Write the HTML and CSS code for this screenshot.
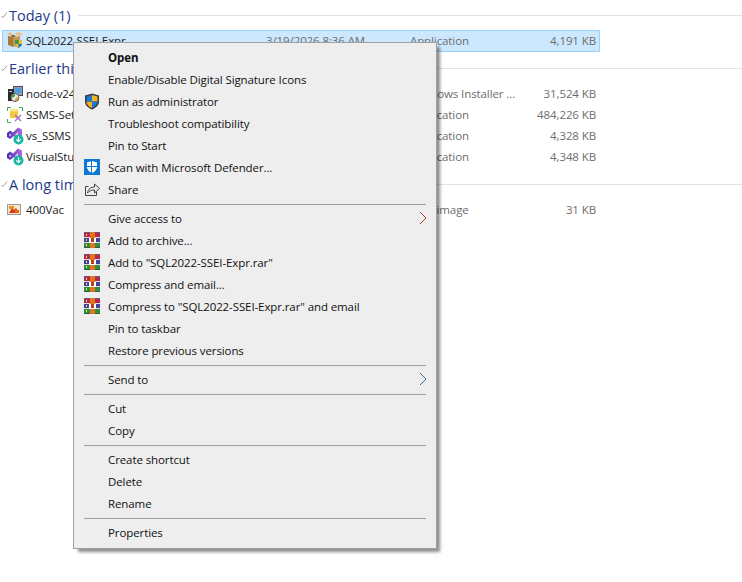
FILE: index.html
```html
<!DOCTYPE html>
<html lang="en">
<head>
    <meta charset="UTF-8">
    <meta name="viewport" content="width=device-width, initial-scale=1.0">
    <title>Downloads</title>
    <link rel="stylesheet" href="styles.css">
</head>
<body>
    <svg class="defs" width="0" height="0">
        <defs>
            <linearGradient id="vsFill" x1="0" y1="0" x2="1" y2="0">
                <stop offset="0" stop-color="#4a2fb0"/>
                <stop offset="1" stop-color="#b56ae6"/>
            </linearGradient>
            <symbol id="rar" viewBox="0 0 16 16">
                <rect x="0" y="0" width="16" height="1" fill="#6e5a78"/>
                <rect x="0" y="1" width="16" height="4" fill="#b5264f"/>
                <rect x="0" y="5" width="16" height="1" fill="#dcdcdc"/>
                <rect x="0" y="6" width="16" height="4" fill="#45419f"/>
                <rect x="0" y="10" width="16" height="1" fill="#dcdcdc"/>
                <rect x="0" y="11" width="16" height="4" fill="#2b8f3f"/>
                <rect x="0" y="15" width="16" height="1" fill="#3d5a3f"/>
                <rect x="2" y="2" width="1" height="2" fill="#f4e04a"/>
                <rect x="2" y="7" width="1" height="2" fill="#f4e04a"/>
                <rect x="2" y="12" width="1" height="2" fill="#f4e04a"/>
                <rect x="6" y="0" width="5" height="16" fill="#e2761f"/>
                <rect x="5" y="6" width="7" height="5" fill="#fff"/>
                <rect x="7" y="6" width="3" height="4" fill="#b8401a"/>
            </symbol>
            <symbol id="vs" viewBox="0 0 18 18">
                <path d="M1 6l3-2.500 3 2 5-5 4 2v9l-4 2-4-4.500L4 12 1 10z" fill="url(#vsFill)"/>
                <path d="M3.500 6.500v3L5.500 8zM12 5l-3 3 3 3z" fill="#efe6fa"/>
                <circle cx="12.500" cy="12.500" r="5" fill="#19b5a0"/>
                <path d="M12.500 9.500v5M10.300 12.300l2.200 2.400 2.200-2.400" fill="none" stroke="#fff" stroke-width="1.200"/>
            </symbol>
        </defs>
    </svg>

    <div class="list">
        <section class="group first">
            <div class="group-head">
                <svg class="chev" width="7" height="7" viewBox="0 0 7 7"><path d="M0.500 5.500l1.500 1 4-5" fill="none" stroke="#a0a0a0"/></svg>
                <span class="group-title">Today (1)</span>
                <span class="group-line"></span>
            </div>
            <div class="row selected">
                <svg class="file-icon" width="16" height="16" viewBox="0 0 16 16">
                    <path d="M1 4l5 1v10l-5-2z" fill="#a87a38"/>
                    <path d="M6 5l7-1v4l-3 2v4l-4 1z" fill="#c89a56"/>
                    <path d="M0 2l3-2 3 2-1 2-4-1zM8 1l4-1 4 2-3 2-4-1z" fill="#e4c48a"/>
                    <path d="M6 3l3 1-3 1-2-1z" fill="#5c4018"/>
                    <path d="M8 8h7v4c0 2-2 3-3.500 4C10 15 8 14 8 12z" fill="#2a6fc4"/>
                    <path d="M11.500 8H15v4h-3.500zM8 12h3.500v4C10 15 8 14 8 12z" fill="#e9c02c"/>
                    <path d="M8 8h3.500v4H8z" fill="#3a9a4a"/>
                </svg>
                <span class="name">SQL2022-SSEI-Expr</span>
                <span class="date">3/19/2026 8:36 AM</span>
                <span class="type">Application</span>
                <span class="size">4,191 KB</span>
            </div>
        </section>

        <section class="group">
            <div class="group-head">
                <svg class="chev" width="7" height="7" viewBox="0 0 7 7"><path d="M0.500 5.500l1.500 1 4-5" fill="none" stroke="#a0a0a0"/></svg>
                <span class="group-title">Earlier this week</span>
                <span class="group-line"></span>
            </div>
            <div class="row">
                <svg class="file-icon" width="16" height="16" viewBox="0 0 16 16">
                    <rect x="6.500" y="0.500" width="9" height="9" fill="#8fa0b8" stroke="#4a4a60"/>
                    <rect x="8" y="2" width="6" height="5" fill="#4f9be0"/>
                    <rect x="1" y="3" width="6" height="12" fill="#2a2a2a"/>
                    <rect x="2" y="5" width="3" height="1" fill="#c8c8c8"/>
                    <circle cx="8" cy="11.500" r="4" fill="#e8e8f0" stroke="#555"/>
                    <path d="M8 8v3.500H4.500C4.500 9.500 6 8 8 8z" fill="#3aa84c"/>
                    <path d="M8 11.500h3.500c0 2-1.500 3.500-3.500 3.500z" fill="#e0a030"/>
                    <circle cx="8" cy="11.500" r="1" fill="#fff"/>
                </svg>
                <span class="name">node-v24.14.0-x64</span>
                <span class="date"></span>
                <span class="type">Windows Installer ...</span>
                <span class="size">31,524 KB</span>
            </div>
            <div class="row">
                <svg class="file-icon" width="16" height="16" viewBox="0 0 16 16">
                    <path d="M0.500 4V0.500H4M12 0.500h3.500V4M0.500 12v3.500H4" fill="none" stroke="#46a84c"/>
                    <rect x="3" y="2" width="8" height="9" rx="1" fill="#f0c93c"/>
                    <ellipse cx="7" cy="3" rx="4" ry="1.500" fill="#f9e596"/>
                    <path d="M8 8l6 6M14 8l-6 6" stroke="#a866d4" stroke-width="1.400"/>
                </svg>
                <span class="name">SSMS-Setup-ENU</span>
                <span class="date"></span>
                <span class="type">Application</span>
                <span class="size">484,226 KB</span>
            </div>
            <div class="row">
                <svg class="file-icon tall" width="18" height="18"><use href="#vs"/></svg>
                <span class="name">vs_SSMS</span>
                <span class="date"></span>
                <span class="type">Application</span>
                <span class="size">4,328 KB</span>
            </div>
            <div class="row">
                <svg class="file-icon tall" width="18" height="18"><use href="#vs"/></svg>
                <span class="name">VisualStudioSetup</span>
                <span class="date"></span>
                <span class="type">Application</span>
                <span class="size">4,348 KB</span>
            </div>
        </section>

        <section class="group last">
            <div class="group-head">
                <svg class="chev" width="7" height="7" viewBox="0 0 7 7"><path d="M0.500 5.500l1.500 1 4-5" fill="none" stroke="#a0a0a0"/></svg>
                <span class="group-title">A long time ago</span>
                <span class="group-line"></span>
            </div>
            <div class="row">
                <svg class="file-icon" width="16" height="16" viewBox="0 0 16 16">
                    <rect x="0.500" y="2.500" width="13" height="10" fill="#f5e6c8" stroke="#9a9a9a"/>
                    <path d="M2 11l3-5 2 2 2-2 3 5z" fill="#d9381e"/>
                    <rect x="2" y="4" width="5" height="3" fill="#f09020"/>
                    <rect x="8" y="8" width="4" height="3" fill="#e86a18"/>
                </svg>
                <span class="name">400Vac</span>
                <span class="date"></span>
                <span class="type">PNG image</span>
                <span class="size">31 KB</span>
            </div>
        </section>
    </div>

    <div class="menu">
        <div class="item bold"><span class="icon"></span>Open</div>
        <div class="item"><span class="icon"></span>Enable/Disable Digital Signature Icons</div>
        <div class="item">
            <span class="icon">
                <svg width="16" height="17" viewBox="0 0 16 17">
                    <path d="M8 0.500l7 2v6c0 4-3.500 6.500-7 8-3.500-1.500-7-4-7-8v-6z" fill="#3a3a44"/>
                    <path d="M8 2l5.500 1.500V8.500H8zM8 8.500V15c-2.800-1.300-5.500-3.300-5.500-6.500z" fill="#f2b51d"/>
                    <path d="M8 2v6.500H2.500V3.500zM8 8.500h5.500c0 3.200-2.700 5.200-5.500 6.500z" fill="#1e78d2"/>
                </svg>
            </span>Run as administrator
        </div>
        <div class="item"><span class="icon"></span>Troubleshoot compatibility</div>
        <div class="item"><span class="icon"></span>Pin to Start</div>
        <div class="item">
            <span class="icon">
                <svg width="16" height="16" viewBox="0 0 16 16">
                    <rect width="16" height="16" fill="#0f78d4"/>
                    <path d="M8 2l5 1.500V8c0 3-2.500 5-5 6-2.500-1-5-3-5-6V3.500z" fill="#fff"/>
                    <path d="M7.500 2v12M3 7.500h10" stroke="#0f78d4"/>
                </svg>
            </span>Scan with Microsoft Defender...
        </div>
        <div class="item">
            <span class="icon">
                <svg width="16" height="16" viewBox="0 0 16 16">
                    <path d="M4.500 5.500H1.500v9h11V11" fill="none" stroke="#444"/>
                    <path d="M3.500 12c.5-4 3.500-6 7-6V3l5 4.500-5 4.500V9c-3 0-5.500.8-7 3z" fill="none" stroke="#444"/>
                </svg>
            </span>Share
        </div>
        <div class="sep"></div>
        <div class="item">
            <span class="icon"></span>Give access to
            <svg class="arrow" width="8" height="14" viewBox="0 0 8 14"><path d="M1 1l6 6-6 6" fill="none" stroke="#a8443c"/></svg>
        </div>
        <div class="item"><span class="icon"><svg width="16" height="16"><use href="#rar"/></svg></span>Add to archive...</div>
        <div class="item"><span class="icon"><svg width="16" height="16"><use href="#rar"/></svg></span>Add to "SQL2022-SSEI-Expr.rar"</div>
        <div class="item"><span class="icon"><svg width="16" height="16"><use href="#rar"/></svg></span>Compress and email...</div>
        <div class="item"><span class="icon"><svg width="16" height="16"><use href="#rar"/></svg></span>Compress to "SQL2022-SSEI-Expr.rar" and email</div>
        <div class="item"><span class="icon"></span>Pin to taskbar</div>
        <div class="item"><span class="icon"></span>Restore previous versions</div>
        <div class="sep"></div>
        <div class="item">
            <span class="icon"></span>Send to
            <svg class="arrow" width="8" height="14" viewBox="0 0 8 14"><path d="M1 1l6 6-6 6" fill="none" stroke="#2e6ea8"/></svg>
        </div>
        <div class="sep"></div>
        <div class="item"><span class="icon"></span>Cut</div>
        <div class="item"><span class="icon"></span>Copy</div>
        <div class="sep"></div>
        <div class="item"><span class="icon"></span>Create shortcut</div>
        <div class="item"><span class="icon"></span>Delete</div>
        <div class="item"><span class="icon"></span>Rename</div>
        <div class="sep"></div>
        <div class="item"><span class="icon"></span>Properties</div>
    </div>
</body>
</html>
```

FILE: styles.css
```css
html, body {
    margin: 0;
    height: 100%;
}
body {
    background: #fff;
    font-family: "Open Sans", "Noto Sans", sans-serif;
    font-size: 11.5px;
    letter-spacing: -0.1px;
    color: #1a1a1a;
    overflow: hidden;
}
.defs {
    position: absolute;
}
.list {
    padding-top: 3px;
}
.group {
    margin-top: 4px;
}
.group.first {
    margin-top: 0;
}
.group.last {
    margin-top: 4px;
}
.group-head {
    display: flex;
    align-items: center;
    height: 24px;
    margin-bottom: 4px;
    padding-left: 1px;
}
.group.first .group-head {
    margin-bottom: 3px;
}
.chev {
    flex: none;
    margin: -2px 1px 0 0;
}
.group-title {
    font-size: 14.5px;
    letter-spacing: 0;
    color: #1e3a8a;
    white-space: nowrap;
}
.group-line {
    flex: 1;
    height: 1px;
    background: #e3e3e3;
    margin-left: 7px;
}
.row {
    display: grid;
    grid-template-columns: 16px 243px 144px 100px 86px;
    align-items: center;
    width: 598px;
    box-sizing: border-box;
    height: 21px;
    margin-left: 2px;
    padding: 0 0 2px 4px;
    color: #6d6d6d;
    border: 1px solid transparent;
    white-space: nowrap;
}
.row.selected {
    height: 22px;
    background: #cce8ff;
    border-color: #99d1ff;
}
.file-icon {
    display: block;
}
.file-icon.tall {
    margin: -2px 0 -2px -1px;
}
.name {
    color: #1a1a1a;
    padding-left: 3px;
}
.size {
    text-align: right;
}
.menu {
    position: absolute;
    left: 73px;
    top: 42px;
    width: 364px;
    box-sizing: border-box;
    padding: 3px 10px 5px 2px;
    background: #eeeeee;
    border: 1px solid #a0a0a0;
    box-shadow: 4px 4px 3px -1px rgba(0, 0, 0, 0.45);
    color: #111;
}
.item {
    position: relative;
    display: flex;
    align-items: center;
    height: 22px;
    white-space: nowrap;
}
.item.bold {
    font-weight: 700;
}
.icon {
    flex: none;
    display: flex;
    align-items: center;
    justify-content: center;
    width: 32px;
}
.icon svg {
    display: block;
}
.arrow {
    position: absolute;
    right: -1px;
    top: 4px;
}
.sep {
    height: 1px;
    background: #a0a0a0;
    margin: 4px 0 2px 8px;
}
```
